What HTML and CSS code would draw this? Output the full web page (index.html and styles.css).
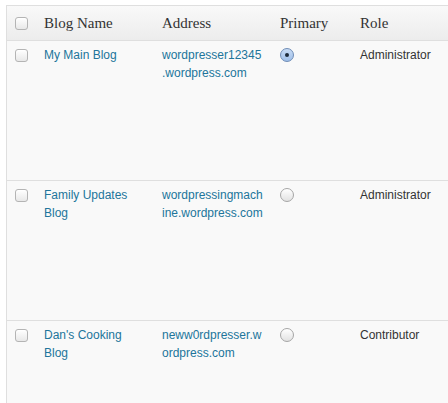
FILE: index.html
```html
<!DOCTYPE html>
<html>
<head>
<meta charset="utf-8">
<link rel="stylesheet" href="styles.css">
</head>
<body>
<div class="wrap">
  <div class="table">
    <div class="row head">
      <div class="cell cb"><span class="check"></span></div>
      <div class="cell">Blog Name</div>
      <div class="cell">Address</div>
      <div class="cell">Primary</div>
      <div class="cell">Role</div>
    </div>
    <div class="row">
      <div class="cell cb"><span class="check"></span></div>
      <div class="cell name"><a href="#">My Main Blog</a></div>
      <div class="cell addr"><a href="#">wordpresser12345<br>.wordpress.com</a></div>
      <div class="cell prim"><span class="radio on"></span></div>
      <div class="cell">Administrator</div>
    </div>
    <div class="row">
      <div class="cell cb"><span class="check"></span></div>
      <div class="cell name"><a href="#">Family Updates<br>Blog</a></div>
      <div class="cell addr"><a href="#">wordpressingmach<br>ine.wordpress.com</a></div>
      <div class="cell prim"><span class="radio"></span></div>
      <div class="cell">Administrator</div>
    </div>
    <div class="row last">
      <div class="cell cb"><span class="check"></span></div>
      <div class="cell name"><a href="#">Dan's Cooking<br>Blog</a></div>
      <div class="cell addr"><a href="#">neww0rdpresser.w<br>ordpress.com</a></div>
      <div class="cell prim"><span class="radio"></span></div>
      <div class="cell">Contributor</div>
    </div>
  </div>
</div>
</body>
</html>
```

FILE: styles.css
```css
html, body {
  margin: 0;
  padding: 0;
  background: #fff;
}
.wrap {
  box-sizing: border-box;
  width: 448px;
  height: 403px;
  padding: 5px 0 0 6px;
  overflow: hidden;
}
.table {
  border-top: 1px solid #dfdfdf;
  border-left: 1px solid #dfdfdf;
  background: #f9f9f9;
  font-family: "Liberation Sans", Arial, sans-serif;
  font-size: 12px;
  line-height: 18px;
  color: #333;
}
.row {
  display: grid;
  grid-template-columns: 29px 118px 118px 80px 1fr;
  height: 139px;
  border-bottom: 1px solid #dfdfdf;
}
.row.last {
  height: 82px;
  border-bottom: 0;
}
.row.head {
  height: 34px;
  background: linear-gradient(#f9f9f9, #ececec);
  font-family: "Liberation Serif", Georgia, serif;
  font-size: 15px;
  align-items: center;
}
.row.head .cell {
  padding-top: 0;
  padding-bottom: 0;
}
.cell {
  padding: 5px 8px 0 8px;
  white-space: nowrap;
}
.cb {
  padding-top: 8px;
}
.head .cb {
  display: flex;
  align-items: center;
}
a {
  color: #21759b;
  text-decoration: none;
}
.check {
  display: block;
  width: 11px;
  height: 11px;
  border: 1px solid #b4b4b4;
  border-radius: 3px;
  background: linear-gradient(#ffffff, #e8e8e8);
  box-shadow: inset 0 1px 0 #fff;
}
.prim {
  padding-top: 7px;
}
.radio {
  display: block;
  width: 12px;
  height: 12px;
  border: 1px solid #a6a6a6;
  border-radius: 50%;
  background: linear-gradient(#ffffff, #e2e2e2);
  position: relative;
}
.radio.on {
  border-color: #6e8cb6;
  background: linear-gradient(#c9dcf5, #9fbfe9);
}
.radio.on::after {
  content: "";
  position: absolute;
  left: 4px;
  top: 4px;
  width: 4px;
  height: 4px;
  border-radius: 50%;
  background: #1c2a3a;
}
```
